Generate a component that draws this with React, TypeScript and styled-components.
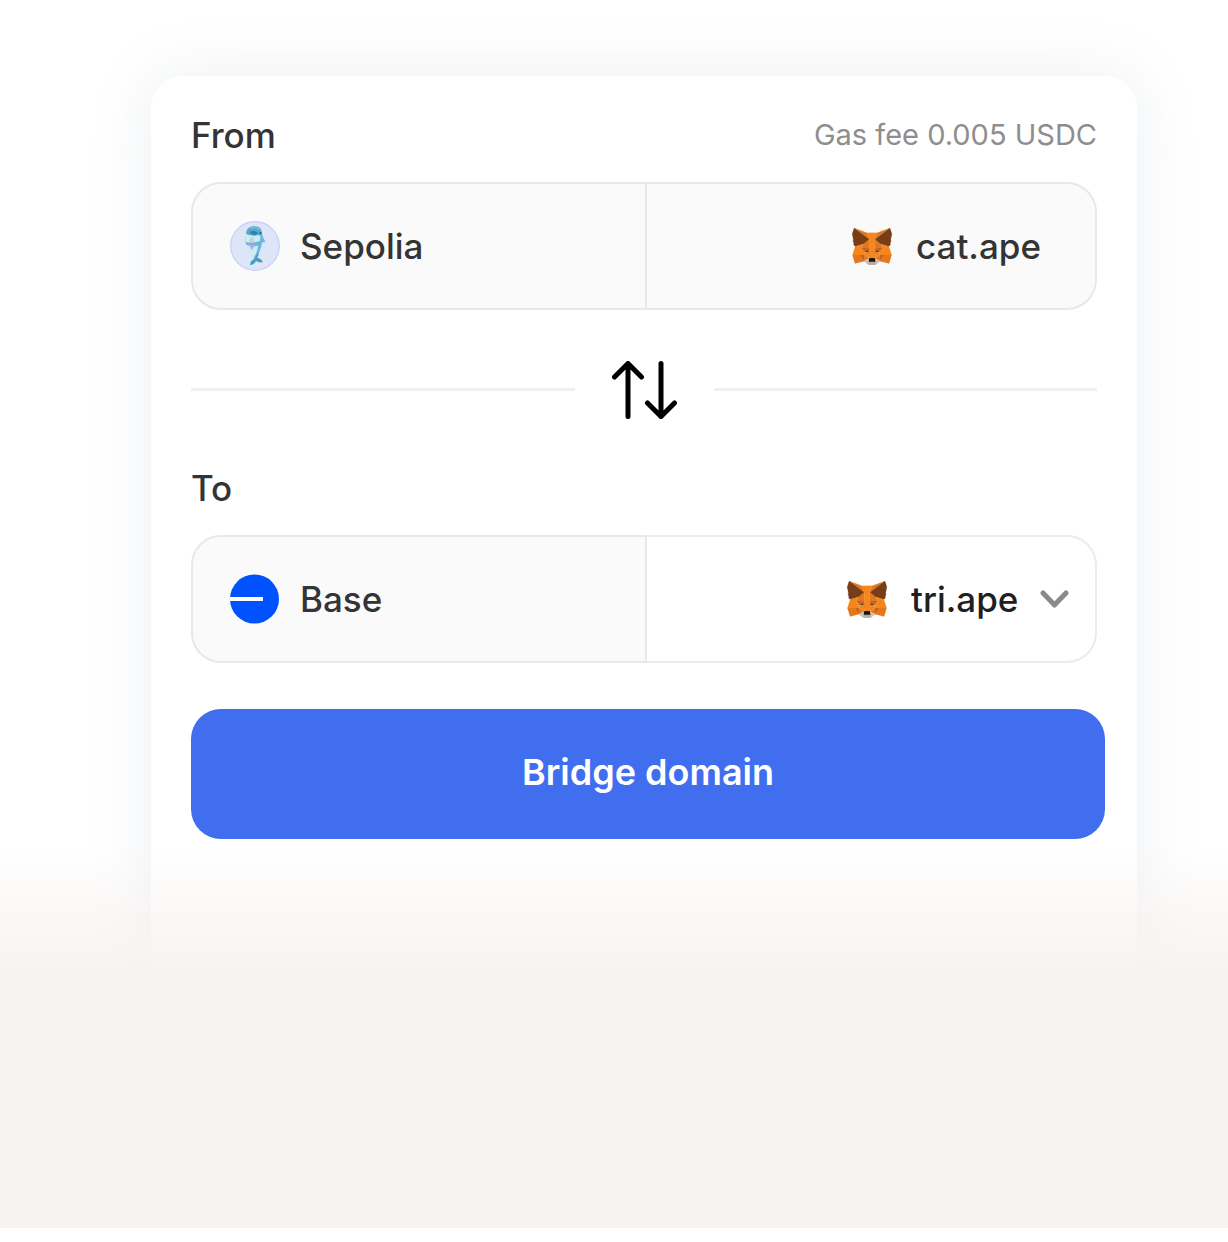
import React from "react";
import styled, { createGlobalStyle } from "styled-components";

const GlobalStyle = createGlobalStyle`
  *, *::before, *::after { box-sizing: border-box; }
  body { margin: 0; background: #ffffff; }
  body, button, select { font-family: Inter, "Liberation Sans", sans-serif; }
`;

const Scene = styled.main`
  position: relative;
  min-height: calc(100vh - 14px);
  margin-bottom: 14px;
  padding: 76px 91px 0 151px;
  overflow: hidden;
`;

const Card = styled.form`
  padding: 38px 40px 240px;
  border-radius: 32px;
  background: #ffffff;
  box-shadow: 0 0 64px rgba(100, 120, 150, 0.12);
`;

const Fade = styled.div`
  position: absolute;
  left: 0;
  right: 0;
  bottom: 0;
  height: 378px;
  background: linear-gradient(rgba(247, 243, 240, 0), #f7f3f0 120px);
  pointer-events: none;
`;

const Header = styled.div`
  display: flex;
  align-items: center;
  justify-content: space-between;
  margin-bottom: 26px;
`;

const Title = styled.h2`
  margin: 0;
  color: #333436;
  font-size: 35px;
  font-weight: 500;
  line-height: 42px;
`;

const Fee = styled.p`
  margin: 0;
  color: #8e8e8e;
  font-size: 29px;
  line-height: 42px;
`;

const Field = styled.div`
  display: grid;
  grid-template-columns: 76fr 75fr;
  height: 128px;
`;

const Cell = styled.div<{ $end?: boolean; $open?: boolean }>`
  display: flex;
  align-items: center;
  gap: ${(p) => (p.$end ? 24 : 20)}px;
  justify-content: ${(p) => (p.$end ? "flex-end" : "flex-start")};
  padding: 0 ${(p) => (p.$open ? 26 : p.$end ? 54 : 37)}px;
  border: 2px solid ${(p) => (p.$open ? "#ececec" : "#e8e8e8")};
  border-left-width: ${(p) => (p.$end ? 0 : 2)}px;
  border-radius: ${(p) => (p.$end ? "0 30px 30px 0" : "30px 0 0 30px")};
  background: ${(p) => (p.$open ? "#ffffff" : "#fafafa")};
`;

const Name = styled.span`
  color: #333436;
  font-size: 35px;
  font-weight: 500;
  line-height: 42px;
`;

const Picker = styled.label`
  display: flex;
  align-items: center;
  gap: 21px;
`;

const WalletSelect = styled.select`
  appearance: none;
  margin: 0;
  padding: 0;
  border: 0;
  background: transparent;
  color: #1f2023;
  font-size: 35px;
  font-weight: 500;
  line-height: 42px;
  cursor: pointer;
`;

const SwapRow = styled.div`
  display: flex;
  align-items: center;
  gap: 37px;
  height: 157px;
  padding-top: 2px;
`;

const Rule = styled.div`
  flex: 1;
  height: 3px;
  background: #f0f0f0;
`;

const SwapButton = styled.button`
  display: flex;
  padding: 0;
  border: 0;
  background: transparent;
  cursor: pointer;
`;

const Submit = styled.button`
  display: block;
  width: calc(100% + 8px);
  height: 130px;
  margin-top: 46px;
  padding: 0 0 4px;
  border: 0;
  border-radius: 30px;
  background: #406eee;
  color: #ffffff;
  font-size: 36px;
  font-weight: 600;
  cursor: pointer;
`;

const foxFacets: [string, string][] = [
  ["#e2761b", "274.1,35.5 174.6,109.4 193,65.8"],
  ["#e4761b", "44.4,35.5 143.1,110.1 125.6,65.8"],
  ["#e4761b", "238.3,206.8 211.8,247.4 268.5,263 284.8,207.7"],
  ["#e4761b", "33.9,207.7 50.1,263 106.8,247.4 80.3,206.8"],
  ["#e4761b", "103.6,138.2 87.8,162.1 144.1,164.6 142.1,104.1"],
  ["#e4761b", "214.9,138.2 175.9,103.4 174.6,164.6 230.8,162.1"],
  ["#e4761b", "106.8,247.4 140.6,230.9 111.4,208.1"],
  ["#e4761b", "177.9,230.9 211.8,247.4 207.1,208.1"],
  ["#d7c1b3", "211.8,247.4 177.9,230.9 180.6,253 180.3,262.3"],
  ["#d7c1b3", "106.8,247.4 138.3,262.3 138.1,253 140.6,230.9"],
  ["#233447", "138.8,193.5 110.6,185.2 130.5,176.1"],
  ["#233447", "179.7,193.5 188,176.1 208,185.2"],
  ["#cd6116", "106.8,247.4 111.6,206.8 80.3,207.7"],
  ["#cd6116", "207,206.8 211.8,247.4 238.3,207.7"],
  ["#cd6116", "230.8,162.1 174.6,164.6 179.8,193.5 188.1,176.1 208.1,185.2"],
  ["#cd6116", "110.6,185.2 130.6,176.1 138.8,193.5 144.1,164.6 87.8,162.1"],
  ["#e4751f", "87.8,162.1 111.4,208.1 110.6,185.2"],
  ["#e4751f", "208.1,185.2 207.1,208.1 230.8,162.1"],
  ["#e4751f", "144.1,164.6 138.8,193.5 145.4,227.6 146.9,182.7"],
  ["#e4751f", "174.6,164.6 171.9,182.6 173.1,227.6 179.8,193.5"],
  ["#f6851b", "179.8,193.5 173.1,227.6 177.9,230.9 207.1,208.1 208.1,185.2"],
  ["#f6851b", "110.6,185.2 111.4,208.1 140.6,230.9 145.4,227.6 138.8,193.5"],
  ["#c0ad9e", "180.3,262.3 180.6,253 178.1,250.8 140.4,250.8 138.1,253 138.3,262.3 106.8,247.4 117.8,256.4 140.1,271.9 178.4,271.9 200.8,256.4 211.8,247.4"],
  ["#161616", "177.9,230.9 173.1,227.6 145.4,227.6 140.6,230.9 138.1,253 140.4,250.8 178.1,250.8 180.6,253"],
  ["#763d16", "278.3,114.2 286.8,73.4 274.1,35.5 177.9,106.9 214.9,138.2 267.2,153.5 278.8,140 273.8,136.4 281.8,129.1 275.6,124.3 283.6,118.2"],
  ["#763d16", "31.8,73.4 40.3,114.2 34.9,118.2 42.9,124.3 36.8,129.1 44.8,136.4 39.8,140 51.3,153.5 103.6,138.2 140.6,106.9 44.4,35.5"],
  ["#f6851b", "267.2,153.5 214.9,138.2 230.8,162.1 207.1,208.1 238.3,207.7 284.8,207.7"],
  ["#f6851b", "103.6,138.2 51.3,153.5 33.9,207.7 80.3,207.7 111.4,208.1 87.8,162.1"],
  ["#f6851b", "174.6,164.6 177.9,106.9 193.1,65.8 125.6,65.8 140.6,106.9 144.1,164.6 145.3,182.8 145.4,227.6 173.1,227.6 173.3,182.8"],
];

const Fox = () => (
  <svg width="40" height="37" viewBox="31 35 256 237" aria-hidden="true">
    {foxFacets.map(([fill, points]) => (
      <polygon key={points} fill={fill} stroke={fill} strokeWidth="1" points={points} />
    ))}
  </svg>
);

const Dolphin = () => (
  <svg width="50" height="50" viewBox="0 0 50 50" aria-hidden="true">
    <circle cx="25" cy="25" r="24.3" fill="#dfe5f9" stroke="#c5d0f7" strokeWidth="1.2" />
    <path d="M16 13C16 7 20 5 25 5C29.500 5 32 8 32 12L33 16L35.500 21L32 21.500C31.500 27 29 31 27.500 37L24 37C20 33 18 28 17.500 23L15.500 20Z" fill="#6cb9d8" />
    <path d="M16 13L21 14L30 14C31 17 30 20 28.500 22L27.500 28C26.500 32 25 35 23.500 37C19 33 17 29 17 24L15.500 19Z" fill="#cdebf5" />
    <path d="M16.500 12C18 5 28 4 31 10L31.500 15L28 14C25 15 21 15 16.500 13Z" fill="#55a9cc" />
    <path d="M19.500 11C23 9 26 10 28 12.500C25 14.500 22 14 19.500 11Z" fill="#357fa6" />
    <path d="M21 8C24 6 27 6 29 9" stroke="#8dd0e5" strokeWidth="1" fill="none" />
    <path d="M15.500 21C20 22 24 21.500 31 20L31 24.500L28 24.500C24 26 19 25 16 23.500Z" fill="#64b8d7" />
    <path d="M22 15.500L25 20L22 22L19 20Z" fill="#efb5cd" />
    <path d="M22 15.500L22 22L25 20Z" fill="#a9e6e4" />
    <path d="M18 22.500L22 24L26 22.500L22 29Z" fill="#b9a4e6" />
    <path d="M26.500 34L24 38C22 39 20 41 20 44C23 44 25 42 26 40C28 41 30 42 33 41C31 38 29 36.500 27 37L29 32Z" fill="#459fc1" />
    <circle cx="30.500" cy="12" r="1" fill="#285373" />
  </svg>
);

const BaseLogo = () => (
  <svg width="50" height="50" viewBox="0 0 50 50" aria-hidden="true">
    <circle cx="24.500" cy="25" r="24.500" fill="#0052ff" />
    <path d="M0 23H33V27H0Z" fill="#ffffff" />
  </svg>
);

const SwapArrows = () => (
  <svg width="65" height="58" viewBox="0 0 65 58" fill="none" stroke="#000000" strokeWidth="5" strokeLinecap="round" strokeLinejoin="round" aria-hidden="true">
    <path d="M16 55.500V2.500M2.500 16L16 2.500L29.500 16" />
    <path d="M49 2.500V55.500M35.500 42L49 55.500L62.500 42" />
  </svg>
);

const Chevron = () => (
  <svg width="29" height="18" viewBox="0 0 29 18" fill="none" stroke="#8a8a8a" strokeWidth="5" strokeLinecap="round" strokeLinejoin="round" aria-hidden="true">
    <path d="M3 3L14.500 15L26 3" />
  </svg>
);

export default function App() {
  return (
    <>
      <GlobalStyle />
      <Scene>
        <Card onSubmit={(e) => e.preventDefault()}>
          <Header>
            <Title>From</Title>
            <Fee>Gas fee 0.005 USDC</Fee>
          </Header>
          <Field>
            <Cell>
              <Dolphin />
              <Name>Sepolia</Name>
            </Cell>
            <Cell $end>
              <Fox />
              <Name>cat.ape</Name>
            </Cell>
          </Field>
          <SwapRow>
            <Rule />
            <SwapButton type="button" aria-label="Swap networks">
              <SwapArrows />
            </SwapButton>
            <Rule />
          </SwapRow>
          <Header>
            <Title>To</Title>
          </Header>
          <Field>
            <Cell>
              <BaseLogo />
              <Name>Base</Name>
            </Cell>
            <Cell $end $open>
              <Fox />
              <Picker>
                <WalletSelect aria-label="Receiving wallet" defaultValue="tri.ape">
                  <option>tri.ape</option>
                </WalletSelect>
                <Chevron />
              </Picker>
            </Cell>
          </Field>
          <Submit type="submit">Bridge domain</Submit>
        </Card>
        <Fade />
      </Scene>
    </>
  );
}
